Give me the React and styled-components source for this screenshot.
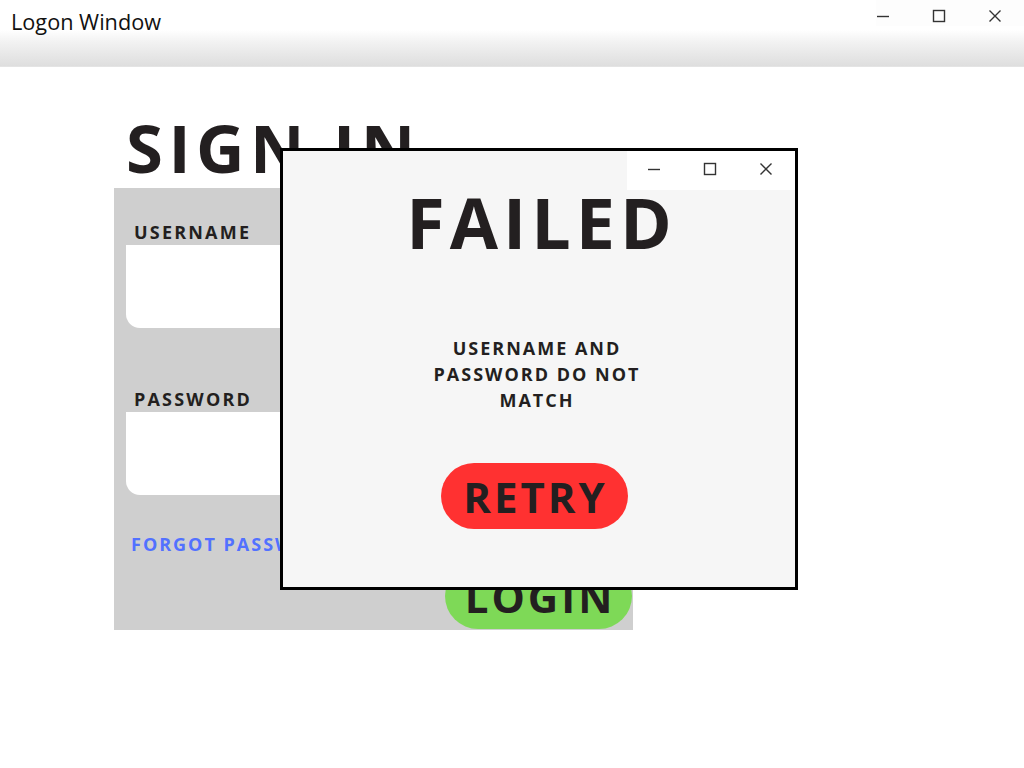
import React from "react";
import styled, { createGlobalStyle } from "styled-components";

const Global = createGlobalStyle`
  html, body { margin: 0; padding: 0; background: #ffffff; }
  body { font-family: "Open Sans", "Liberation Sans", sans-serif; color: #231f20; }
`;

const Page = styled.div`
  width: 1024px;
  height: 768px;
  overflow: hidden;
  display: flex;
  flex-direction: column;
`;

const TitleBar = styled.div`
  height: 67px;
  flex: none;
  display: flex;
  align-items: flex-start;
  justify-content: space-between;
  background: linear-gradient(to bottom, #ffffff 0px, #ffffff 30px, #f2f2f2 42px, #dedede 66px);
  border-bottom: 1px solid #e4e4e4;
  box-sizing: border-box;
`;

const TitleText = styled.div`
  font-size: 21.7px;
  line-height: 24px;
  padding: 10px 0 0 11px;
  color: #111111;
`;

const Controls = styled.div`
  display: flex;
  align-items: center;
  gap: ${p => p.$gap}px;
  padding: ${p => p.$pad};
  background: ${p => p.$bg || "transparent"};
  height: ${p => p.$h}px;
  box-sizing: border-box;
`;

const Ctl = styled.svg`
  width: 14px;
  height: 14px;
  display: block;
  stroke: #333;
  stroke-width: 1.4;
  fill: none;
`;

const WinControls = ({ gap, pad, bg, h }) => (
  <Controls $gap={gap} $pad={pad} $bg={bg} $h={h}>
    <Ctl viewBox="0 0 14 14"><path d="M1 7.5h12" /></Ctl>
    <Ctl viewBox="0 0 14 14"><rect x="1.5" y="1.5" width="11" height="11" /></Ctl>
    <Ctl viewBox="0 0 14 14"><path d="M1.5 1.5l11 11M12.5 1.5l-11 11" /></Ctl>
  </Controls>
);

const Content = styled.div`
  position: relative;
  flex: 1;
  padding-left: 114px;
`;

const Heading = styled.h1`
  margin: 0;
  padding: 40px 0 0 12px;
  height: 121px;
  box-sizing: border-box;
  font-size: 67px;
  line-height: 80px;
  font-weight: 700;
  letter-spacing: 5.5px;
`;

const Panel = styled.div`
  width: 519px;
  height: 442px;
  background: #cfcfcf;
  display: flex;
  flex-direction: column;
  box-sizing: border-box;
  padding-top: 33px;
`;

const Label = styled.div`
  font-size: 18px;
  line-height: 22px;
  font-weight: 700;
  letter-spacing: 2.2px;
  padding-left: 20px;
  margin-top: ${p => p.$mt || 0}px;
  margin-bottom: 2px;
`;

const Input = styled.div`
  margin-left: 12px;
  width: 480px;
  height: 83px;
  background: #ffffff;
  border-radius: 0 0 14px 14px;
`;

const Forgot = styled.div`
  margin-top: 38px;
  padding-left: 17px;
  font-size: 18px;
  line-height: 22px;
  font-weight: 700;
  letter-spacing: 2px;
  color: #5271ff;
`;

const Row = styled.div`
  display: flex;
  justify-content: flex-end;
  margin-top: 8px;
  padding-right: 1px;
`;

const Pill = styled.div`
  width: 187px;
  height: 66px;
  border-radius: 33px;
  background: ${p => p.$bg};
  display: flex;
  align-items: center;
  justify-content: center;
  font-size: 42px;
  font-weight: 700;
  letter-spacing: 3px;
  color: #231f20;
  padding-left: 3px;
  box-sizing: border-box;
`;

const Dialog = styled.div`
  position: absolute;
  left: 280px;
  top: 81px;
  width: 518px;
  height: 442px;
  box-sizing: border-box;
  border: 3px solid #000000;
  background: #f6f6f6;
  display: flex;
  flex-direction: column;
  align-items: center;
`;

const DialogTop = styled.div`
  align-self: stretch;
  display: flex;
  justify-content: flex-end;
`;

const Failed = styled.div`
  margin-top: -8px;
  font-size: 70px;
  line-height: 80px;
  font-weight: 700;
  letter-spacing: 5px;
  padding-left: 5px;
`;

const Message = styled.div`
  margin-top: 73px;
  width: 240px;
  text-align: center;
  font-size: 18px;
  line-height: 26px;
  font-weight: 700;
  letter-spacing: 2px;
  margin-right: 4px;
`;

const DialogActions = styled.div`
  margin-top: 50px;
  margin-right: 10px;
`;

export default function App() {
  return (
    <Page>
      <Global />
      <TitleBar>
        <TitleText>Logon Window</TitleText>
        <WinControls gap={42} pad="5px 22px 0 0" bg="#fdfdfd" h={26} />
      </TitleBar>
      <Content>
        <Heading>SIGN IN</Heading>
        <Panel>
          <Label>USERNAME</Label>
          <Input />
          <Label $mt={60}>PASSWORD</Label>
          <Input />
          <Forgot>FORGOT PASSWORD?</Forgot>
          <Row>
            <Pill $bg="#7ed957">LOGIN</Pill>
          </Row>
        </Panel>
        <Dialog>
          <DialogTop>
            <WinControls gap={42} pad="0 22px 4px 20px" bg="#ffffff" h={39} />
          </DialogTop>
          <Failed>FAILED</Failed>
          <Message>USERNAME AND PASSWORD DO NOT MATCH</Message>
          <DialogActions>
            <Pill $bg="#ff3131">RETRY</Pill>
          </DialogActions>
        </Dialog>
      </Content>
    </Page>
  );
}
